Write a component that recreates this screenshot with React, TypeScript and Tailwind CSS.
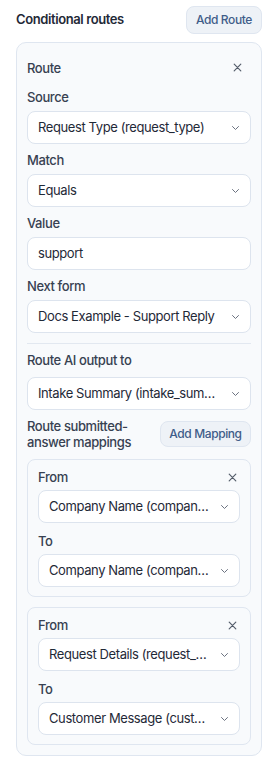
import React from "react";

const Chevron = () => (
  <svg width="9" height="6" viewBox="0 0 9 6" fill="none" className="shrink-0">
    <path d="M1.5 1.5L4.5 4.5L7.5 1.5" stroke="#6b7280" strokeWidth="1" strokeLinecap="round" strokeLinejoin="round" />
  </svg>
);

const XIcon = () => (
  <svg width="9" height="9" viewBox="0 0 9 9" fill="none">
    <path d="M1.2 1.2L7.8 7.8M7.8 1.2L1.2 7.8" stroke="#555e6b" strokeWidth="1.2" strokeLinecap="round" />
  </svg>
);

const Select = ({ text, className = "" }: { text: string; className?: string }) => (
  <div
    className={`flex h-[33px] items-center justify-between rounded-[8px] border border-[#dde4ee] bg-white pl-[10px] pr-[10px] text-[13px] text-[#1f2937] ${className}`}
  >
    <span className="whitespace-nowrap">{text}</span>
    <Chevron />
  </div>
);

const Label = ({ children, className = "" }: { children: React.ReactNode; className?: string }) => (
  <div className={`h-[18px] text-[13px] leading-[18px] font-medium text-[#374151] ${className}`}>{children}</div>
);

const MappingCard = ({ from, to, className = "" }: { from: string; to: string; className?: string }) => (
  <div className={`rounded-[8px] border border-[#dfe6f0] bg-[#f8fafc] px-[10px] pt-[8px] pb-[9px] ${className}`}>
    <div className="flex h-[18px] items-center justify-between">
      <Label>From</Label>
      <div className="flex h-4 w-4 items-center justify-center">
        <XIcon />
      </div>
    </div>
    <Select text={from} className="mt-[4px]" />
    <Label className="mt-[9px]">To</Label>
    <Select text={to} className="mt-[4px]" />
  </div>
);

export default function App() {
  return (
    <div className="w-[272px] bg-white pl-4 pr-[10px] pt-[6px] pb-[5px] font-['Inter',sans-serif] tracking-[-0.4px]">
      <div className="flex h-[28px] items-center justify-between">
        <div className="text-[13px] font-semibold text-[#1f2937]">Conditional routes</div>
        <button className="flex h-[28px] w-[76px] items-center justify-center rounded-[8px] border border-[#dfe6f0] bg-[#eef2f7] text-[12px] font-medium text-[#3f5d89]">
          Add Route
        </button>
      </div>
      <div className="mt-[8px] rounded-[10px] border border-[#dfe6f0] bg-[#f8fafc] px-[10px] pt-[12px] pb-[10px]">
        <div className="flex h-[25px] items-center justify-between">
          <Label>Route</Label>
          <div className="mr-[6px] flex h-4 w-4 items-center justify-center">
            <XIcon />
          </div>
        </div>
        <Label className="mt-[8px]">Source</Label>
        <Select text="Request Type (request_type)" className="mt-[5px]" />
        <Label className="mt-[7px]">Match</Label>
        <Select text="Equals" className="mt-[5px]" />
        <Label className="mt-[7px]">Value</Label>
        <div className="mt-[5px] flex h-[33px] items-center rounded-[8px] border border-[#dde4ee] bg-white pl-[10px] text-[13px] text-[#1f2937]">
          support
        </div>
        <Label className="mt-[7px]">Next form</Label>
        <Select text="Docs Example - Support Reply" className="mt-[5px]" />
        <div className="mt-[10px] h-px bg-[#e2e8f0]" />
        <Label className="mt-[7px]">Route AI output to</Label>
        <Select text="Intake Summary (intake_sum…" className="mt-[8px]" />
        <div className="mt-[8px] flex items-center justify-between">
          <div className="text-[13px] leading-[16px] font-medium text-[#374151]">
            Route submitted-
            <br />
            answer mappings
          </div>
          <button className="flex h-[26px] w-[91px] items-center justify-center rounded-[8px] border border-[#dfe6f0] bg-[#eef2f7] text-[12px] font-medium text-[#3f5d89]">
            Add Mapping
          </button>
        </div>
        <MappingCard className="mt-[9px]" from="Company Name (compan…" to="Company Name (compan…" />
        <MappingCard className="mt-[10px]" from="Request Details (request_…" to="Customer Message (cust…" />
      </div>
    </div>
  );
}
